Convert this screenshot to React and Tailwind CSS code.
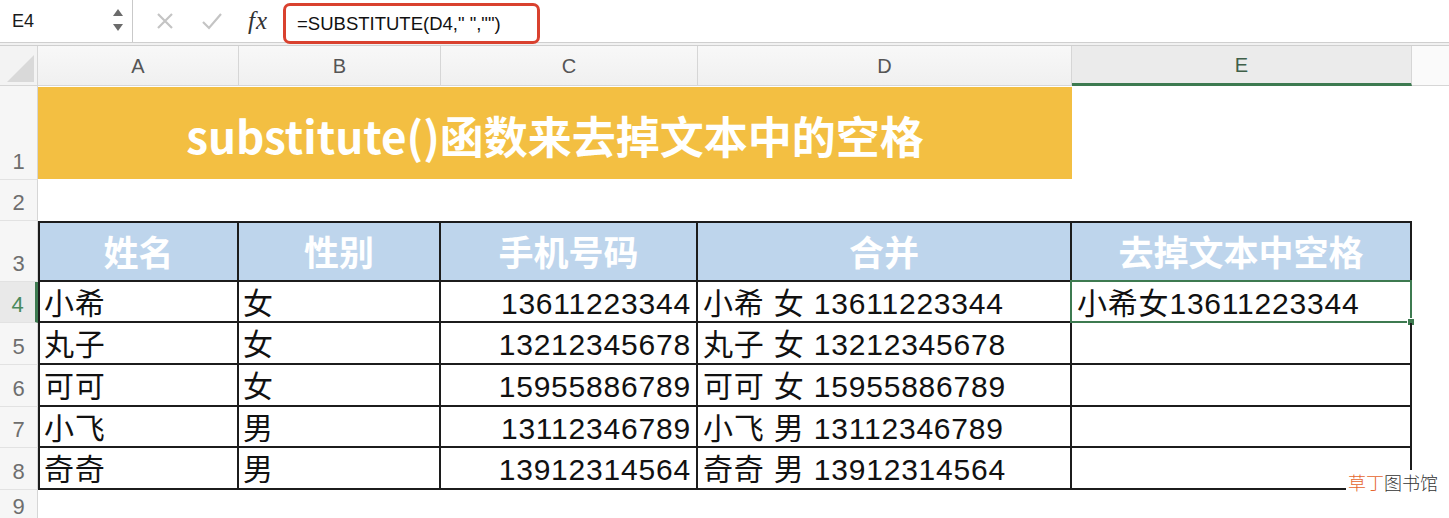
import React from "react";

const CJK = { fontFamily: '"Liberation Sans", "Noto Sans CJK SC", sans-serif' };
const TITLE = { fontFamily: '"Noto Sans CJK SC", "Liberation Sans", sans-serif' };

const people = [
  { name: "小希", sex: "女", phone: "13611223344" },
  { name: "丸子", sex: "女", phone: "13212345678" },
  { name: "可可", sex: "女", phone: "15955886789" },
  { name: "小飞", sex: "男", phone: "13112346789" },
  { name: "奇奇", sex: "男", phone: "13912314564" },
];

function FormulaBar() {
  return (
    <div className="flex h-[42px] items-center bg-white" style={CJK}>
      <div className="flex h-full w-[133px] items-center border-r border-[#c9c9c9] pl-[12px] pr-[8px]">
        <span className="flex-1 text-[18px] text-[#1a1a1a]">E4</span>
        <svg width="12" height="26" viewBox="0 0 12 26" className="mb-[2px]">
          <polygon points="6,2 11,9 1,9" fill="#6b6b6b" />
          <polygon points="1,17 11,17 6,24" fill="#6b6b6b" />
        </svg>
      </div>
      <svg width="18" height="18" viewBox="0 0 18 18" className="ml-[23px]">
        <path d="M2 2 L16 16 M16 2 L2 16" stroke="#c4c4c4" strokeWidth="2.2" fill="none" />
      </svg>
      <svg width="22" height="18" viewBox="0 0 22 18" className="ml-[27px]">
        <path d="M2 10 L8 16 L20 2" stroke="#c4c4c4" strokeWidth="2.2" fill="none" />
      </svg>
      <span
        className="ml-[25px] text-[25px] italic tracking-[1px] text-[#333]"
        style={{ fontFamily: '"Liberation Serif", serif' }}
      >
        fx
      </span>
      <div className="ml-[15px] mt-[5px] flex h-[41px] w-[257px] items-center rounded-[7px] border-[3px] border-[#d9412f] pl-[11px]">
        <span className="text-[18.5px] text-[#111]">=SUBSTITUTE(D4," ","")</span>
      </div>
    </div>
  );
}

function ColHeader({ label, active }) {
  return (
    <div
      className={`flex items-center justify-center border-r text-[20px] ${
        active
          ? "border-b-[3px] border-r-[#d6d6d6] border-b-[#3d7a50] bg-[#ebebeb] text-[#3f5f49]"
          : "border-b border-[#d6d6d6] bg-gradient-to-b from-[#f8f8f8] to-[#f0f0f0] text-[#555]"
      }`}
    >
      {label}
    </div>
  );
}

function RowHeader({ n, active }) {
  return (
    <div
      className={`flex items-end justify-center border-b border-[#e2e2e2] pb-[1px] text-[22px] ${
        active
          ? "border-r-[3px] border-r-[#3d7a50] bg-[#e9e9e9] text-[#4a8a5c]"
          : "border-r border-r-[#d6d6d6] bg-[#f6f6f6] text-[#6e6e6e]"
      }`}
    >
      {n}
    </div>
  );
}

const cell = "border-b-2 border-r-2 border-[#1c1c1c] flex items-center pt-[3px] text-[30px] text-[#111] tracking-[0.8px]";
const head = "border-b-2 border-r-2 border-t-2 border-[#1c1c1c] bg-[#bed5ec] flex items-center justify-center text-[35px] font-bold text-white";

export default function App() {
  return (
    <div className="relative h-[518px] w-[1449px] overflow-hidden bg-white" style={CJK}>
      <FormulaBar />
      <div className="h-[4px] border-y border-[#cfcfcf] bg-[#f1f1f1]" />

      <div className="grid h-[472px] grid-cols-[38px_201px_202px_257px_374px_340px_1fr] grid-rows-[40px_94px_41px_61px_41px_42px_42px_41px_42px_1fr]">
        {/* column headers */}
        <div className="border-b border-r border-[#d6d6d6] bg-[#f3f3f3]">
          <svg width="37" height="39" viewBox="0 0 37 39">
            <polygon points="34,9 34,36 7,36" fill="#d9d9d9" />
          </svg>
        </div>
        <ColHeader label="A" />
        <ColHeader label="B" />
        <ColHeader label="C" />
        <ColHeader label="D" />
        <ColHeader label="E" active />
        <div className="border-b border-[#d6d6d6] bg-[#fafafa]" />

        {/* row 1 */}
        <RowHeader n={1} />
        <div className="col-span-4 mb-[1px] mt-[1px] flex items-center justify-center bg-[#f3bf42] pt-[4px]">
          <span className="text-[44px] font-semibold text-white" style={TITLE}>
            substitute()函数来去掉文本中的空格
          </span>
        </div>
        <div />
        <div />

        {/* row 2 */}
        <RowHeader n={2} />
        <div className="col-span-6" />

        {/* row 3 */}
        <RowHeader n={3} />
        <div className={`${head} border-l-2`} style={TITLE}>姓名</div>
        <div className={head} style={TITLE}>性别</div>
        <div className={head} style={TITLE}>手机号码</div>
        <div className={head} style={TITLE}>合并</div>
        <div className={head} style={TITLE}>去掉文本中空格</div>
        <div />

        {people.map((p, i) => (
          <React.Fragment key={p.phone}>
            <RowHeader n={i + 4} active={i === 0} />
            <div className={`${cell} border-l-2 pl-[4px]`}>{p.name}</div>
            <div className={`${cell} pl-[4px]`}>{p.sex}</div>
            <div className={`${cell} justify-end pr-[5px]`}>{p.phone}</div>
            <div className={`${cell} pl-[5px]`}>
              {p.name} {p.sex} {p.phone}
            </div>
            <div className={`${cell} relative pl-[5px]`}>
              {i === 0 && (
                <>
                  {p.name + p.sex + p.phone}
                  <div className="absolute -left-[2px] -top-[2px] bottom-[-2px] right-[-2px] border-[2px] border-[#3d7a50]" />
                  <div className="absolute bottom-[-5px] right-[-5px] h-[8px] w-[8px] border border-white bg-[#3d7a50]" />
                </>
              )}
            </div>
            <div />
          </React.Fragment>
        ))}

        {/* row 9 */}
        <RowHeader n={9} />
        <div className="col-span-6" />
      </div>

      {/* watermark */}
      <div
        className="absolute left-[1346px] top-[470px] bg-white px-[2px] text-[18px] font-light leading-[24px] text-[#333]"
        style={TITLE}
      >
        <span className="text-[#e5652d]">草丁</span>图书馆
      </div>
    </div>
  );
}
